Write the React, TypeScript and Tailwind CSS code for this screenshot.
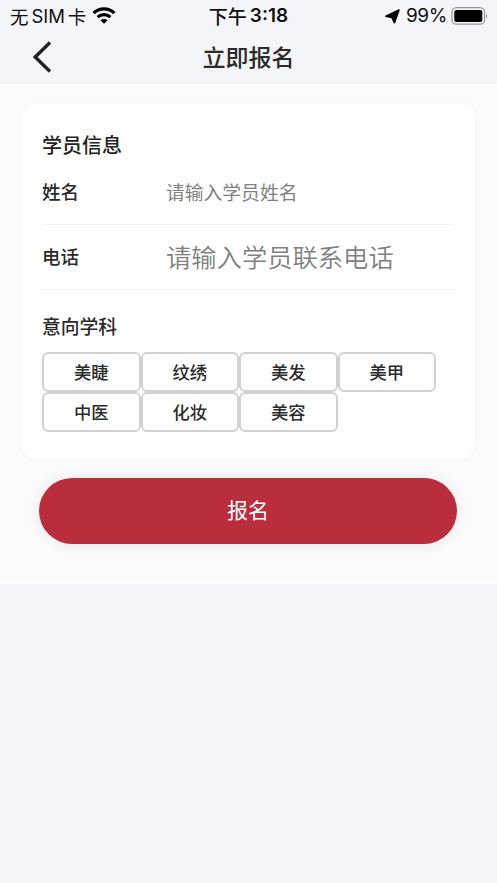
import { useState } from 'react';

const subjects = ['美睫', '纹绣', '美发', '美甲', '中医', '化妆', '美容'];

const StatusBar = () => (
  <div className="grid h-8 grid-cols-3 items-center pr-[9px] pl-[10px] text-[19px] leading-8 text-[#111]">
    <div className="flex items-center whitespace-nowrap">
      <span className="text-[18.5px]">无</span>
      <span className="ml-[3px] font-[Inter,sans-serif] text-[18.5px] tracking-[-0.1px]">SIM</span>
      <span className="ml-[3px] text-[18.5px]">卡</span>
      <svg className="ml-[6px]" width="24" height="18" viewBox="0 0 24 18" fill="none">
        <path d="M1.6 6.1C7.4 0.5 16.6 0.5 22.4 6.1" stroke="#000" strokeWidth="3.4" />
        <path d="M5.6 10.2C9.2 6.8 14.8 6.8 18.4 10.2" stroke="#000" strokeWidth="3.1" />
        <path d="M12 16.8L8.4 13.3C10.4 11.5 13.6 11.5 15.6 13.3Z" fill="#000" />
      </svg>
    </div>
    <div className="flex items-center justify-center whitespace-nowrap pr-px font-medium">
      <span className="text-[19px]">下午</span>
      <span className="ml-[3px] font-[Inter,sans-serif] text-[19px] font-semibold">3:18</span>
    </div>
    <div className="flex items-center justify-end whitespace-nowrap">
      <svg width="15" height="15" viewBox="0 0 15 15">
        <path d="M14 1L9.4 13.8L7 8.4L0.9 7.2Z" fill="#000" stroke="#000" strokeWidth="1.6" strokeLinejoin="round" />
      </svg>
      <span className="ml-[6px] font-[Inter,sans-serif] text-[19px] tracking-[-0.4px]">99%</span>
      <svg className="ml-[4px]" width="37" height="19" viewBox="0 0 37 19">
        <rect x="1" y="0.7" width="32.5" height="16.5" rx="4.5" fill="none" stroke="#999" strokeWidth="1.3" />
        <rect x="3.3" y="3" width="28" height="12" rx="2" fill="#000" />
        <path d="M35 6.7C36.6 7.5 36.6 10.5 35 11.3Z" fill="#999" />
      </svg>
    </div>
  </div>
);

const NavBar = () => (
  <div className="grid h-[52px] grid-cols-3 items-center pb-[3px]">
    <button className="pl-8" aria-label="返回">
      <svg width="20" height="32" viewBox="0 0 20 32" fill="none">
        <path d="M18 1.5L3.2 16L18 30.5" stroke="#222" strokeWidth="3.4" />
      </svg>
    </button>
    <h1 className="text-center text-[23px] leading-[49px] font-medium text-[#2b2b2b]">立即报名</h1>
  </div>
);

interface FieldProps {
  label: string;
  placeholder: string;
  inputClass: string;
  value: string;
  onChange: (value: string) => void;
}

const Field = ({ label, placeholder, inputClass, value, onChange }: FieldProps) => (
  <label className="flex h-[65px] items-center border-b border-[#f3f3f3]">
    <span className="w-[124px] shrink-0 text-[18.5px] font-medium text-[#2b2b2b]">{label}</span>
    <input
      className={`min-w-0 flex-1 bg-transparent outline-none placeholder:text-[#808080] ${inputClass}`}
      placeholder={placeholder}
      value={value}
      onChange={(e) => onChange(e.target.value)}
    />
  </label>
);

const App = () => {
  const [name, setName] = useState('');
  const [phone, setPhone] = useState('');
  const [selected, setSelected] = useState<string | null>(null);

  return (
    <div className="min-h-screen bg-[#f4f5f8] font-['Noto_Sans_CJK_SC',sans-serif]">
      <StatusBar />
      <NavBar />

      <main className="h-[500px] border-y-2 border-white bg-[#fbfbfb] px-[22px] pt-[18px]">
        <section className="h-[354px] rounded-[14px] bg-white pt-[26px] pr-[21px] pl-5 shadow-[0_0_12px_rgba(0,0,0,0.02)]">
          <h2 className="h-[30px] text-[20px] leading-[30px] font-medium text-[#222]">学员信息</h2>
          <Field
            label="姓名"
            placeholder="请输入学员姓名"
            inputClass="text-[18.8px]"
            value={name}
            onChange={setName}
          />
          <Field
            label="电话"
            placeholder="请输入学员联系电话"
            inputClass="text-[25.3px] font-[350]"
            value={phone}
            onChange={setPhone}
          />

          <h3 className="mt-[21px] h-[30px] text-[18.8px] leading-[30px] font-medium text-[#2b2b2b]">意向学科</h3>
          <div className="mt-[11px] grid w-[394px] grid-cols-4">
            {subjects.map((subject) => (
              <button
                key={subject}
                onClick={() => setSelected(subject)}
                className={`h-10 rounded-[6px] border-2 text-[17.3px] font-medium ${
                  selected === subject ? 'border-[#b92d3d] text-[#b92d3d]' : 'border-[#d2d2d2] text-[#2b2b2b]'
                }`}
              >
                {subject}
              </button>
            ))}
          </div>
        </section>

        <button className="mx-[17px] mt-5 block h-[66px] w-[418px] rounded-full bg-[#b92d3d] pb-[2px] text-[21px] font-normal text-white shadow-[0_0_14px_rgba(40,50,80,0.1)]">
          报名
        </button>
      </main>
    </div>
  );
};

export default App;
